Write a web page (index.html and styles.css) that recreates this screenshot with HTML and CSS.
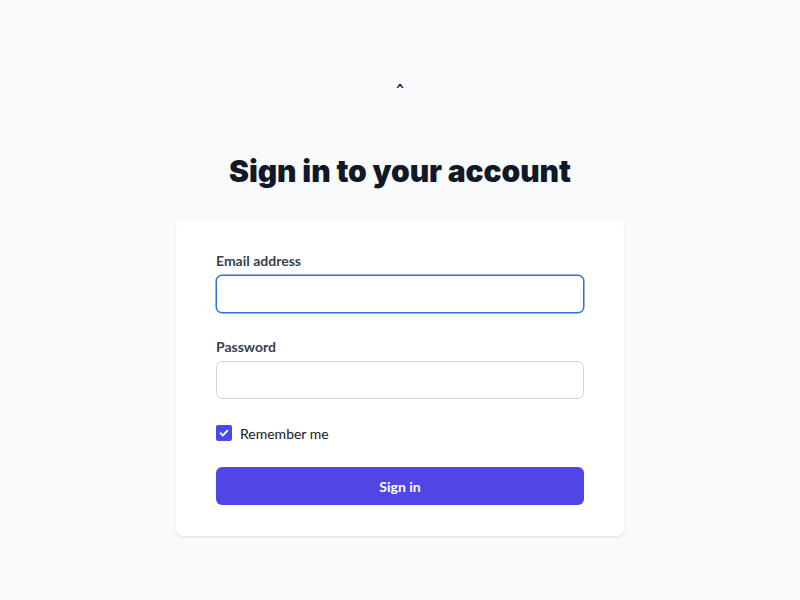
FILE: index.html
```html
<!DOCTYPE html>
<html lang="en">
<head>
<meta charset="utf-8">
<title>Sign in</title>
<link rel="stylesheet" href="styles.css">
</head>
<body>
<main class="page">
  <div class="logo">ˆ</div>
  <h1 class="title">Sign in to your account</h1>
  <form class="card">
    <div class="field">
      <label class="label" for="email">Email address</label>
      <input class="input input-focus" id="email" type="email">
    </div>
    <div class="field">
      <label class="label" for="password">Password</label>
      <input class="input" id="password" type="password">
    </div>
    <label class="remember">
      <span class="check">
        <svg viewBox="0 0 16 16" width="16" height="16"><path d="M4.5 8.2l2.3 2.3 4.7-4.8" fill="none" stroke="#fff" stroke-width="1.8" stroke-linecap="round" stroke-linejoin="round"/></svg>
      </span>
      <span class="remember-text">Remember me</span>
    </label>
    <button class="button" type="button">Sign in</button>
  </form>
</main>
</body>
</html>
```
FILE: styles.css
```css
* { box-sizing: border-box; }
html, body { margin: 0; padding: 0; }
body {
  background: #f9fafb;
  font-family: Lato, "Noto Sans", sans-serif;
  color: #111827;
  width: 800px;
  height: 600px;
  overflow: hidden;
}
.page {
  display: flex;
  flex-direction: column;
  align-items: center;
  padding-top: 79px;
}
.logo {
  height: 30px;
  font-size: 22px;
  line-height: 30px;
  color: #111827;
  font-family: "DejaVu Sans", sans-serif;
}
.title {
  margin: 44px 0 0;
  font-family: Inter, sans-serif;
  font-size: 30px;
  line-height: 36px;
  font-weight: 900;
  color: #111827;
  letter-spacing: -0.1px;
}
.card {
  margin-top: 31px;
  width: 448px;
  background: #fff;
  border-radius: 8px;
  box-shadow: 0 1px 3px rgba(0,0,0,0.08), 0 1px 2px rgba(0,0,0,0.04);
  padding: 31px 40px;
  display: flex;
  flex-direction: column;
  gap: 24px;
}
.field { display: flex; flex-direction: column; gap: 4px; }
.label {
  font-size: 14px;
  line-height: 20px;
  font-weight: 700;
  color: #374151;
}
.input {
  height: 38px;
  width: 100%;
  border: 1px solid #d1d5db;
  border-radius: 6px;
  background: #fff;
  outline: none;
}
.input-focus {
  border: 1.5px solid #2f6fd6;
  box-shadow: 0 0 0 0.5px #2f6fd6;
}
.remember {
  display: flex;
  align-items: center;
  gap: 8px;
  height: 20px;
}
.check {
  width: 16px;
  height: 16px;
  background: #4f46e5;
  border-radius: 2px;
  display: flex;
}
.remember-text {
  font-size: 14px;
  color: #111827;
}
.button {
  height: 38px;
  width: 100%;
  border: none;
  border-radius: 6px;
  background: #4f46e5;
  color: #fff;
  font-family: Lato, "Noto Sans", sans-serif;
  font-size: 14px;
  font-weight: 700;
}
```
